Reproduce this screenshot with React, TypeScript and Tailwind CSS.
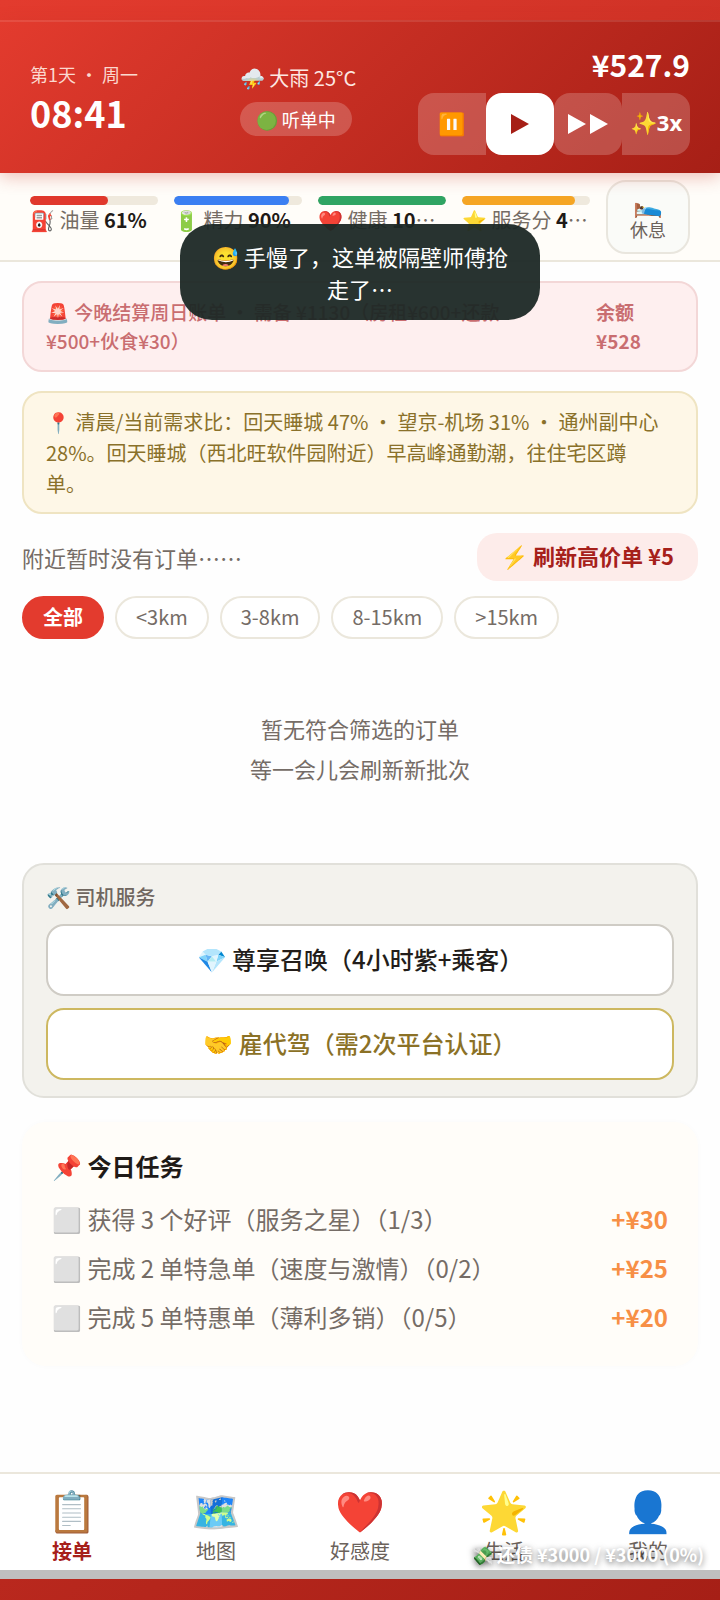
import React from "react";

type Stat = { icon: string; label: string; value: string; percent: number; color: string };

const stats: Stat[] = [
  { icon: "⛽", label: "油量", value: "61%", percent: 61, color: "bg-[#e0382c]" },
  { icon: "🔋", label: "精力", value: "90%", percent: 90, color: "bg-[#3b7ff2]" },
  { icon: "❤️", label: "健康", value: "100%", percent: 100, color: "bg-[#2fa463]" },
  { icon: "⭐", label: "服务分", value: "4.4/5", percent: 88, color: "bg-[#f5a524]" },
];

const filters = ["全部", "<3km", "3-8km", "8-15km", ">15km"];

const tasks = [
  { text: "获得 3 个好评（服务之星）（1/3）", reward: "+¥30" },
  { text: "完成 2 单特急单（速度与激情）（0/2）", reward: "+¥25" },
  { text: "完成 5 单特惠单（薄利多销）（0/5）", reward: "+¥20" },
];

const tabs = [
  { icon: "📋", label: "接单" },
  { icon: "🗺️", label: "地图" },
  { icon: "❤️", label: "好感度" },
  { icon: "🌟", label: "生活" },
  { icon: "👤", label: "我的" },
];

function Header() {
  return (
    <header className="relative z-10 flex items-center justify-between border-t-2 border-white/10 bg-linear-135 from-[#e33b2e] to-[#a61f16] bg-origin-border px-[30px] pt-[22px] pb-[18px] text-white shadow-[0_4px_16px_rgba(200,50,35,0.3)]">
      <div className="min-w-[148px] pb-1">
        <div className="text-lg leading-7 text-[#fbd9cf]">第1天 · 周一</div>
        <div className="text-4xl leading-[48px] font-bold">08:41</div>
      </div>
      <div className="flex flex-col items-start gap-[10px]">
        <div className="text-xl leading-7 text-[#fde8e2]">⛈️ 大雨 25°C</div>
        <div className="rounded-full bg-white/20 px-4 text-lg leading-[34px]">🟢 听单中</div>
      </div>
      <div className="flex flex-col items-end gap-[9px]">
        <div className="text-3xl leading-10 font-bold">¥527.9</div>
        <div className="flex text-[22px] font-bold">
          <button aria-label="暂停" className="h-[62px] w-[68px] rounded-l-2xl bg-white/20 pb-1">⏸️</button>
          <button aria-label="正常速度" className="flex h-[62px] w-[68px] items-center justify-center rounded-2xl bg-white">
            <svg width="18" height="20" viewBox="0 0 18 20" fill="#a61f16"><path d="M0 0L18 10L0 20Z" /></svg>
          </button>
          <button aria-label="快进" className="flex h-[62px] w-[68px] items-center justify-center gap-1 rounded-2xl bg-white/20">
            <svg width="18" height="20" viewBox="0 0 18 20" fill="#fff"><path d="M0 0L18 10L0 20Z" /></svg>
            <svg width="18" height="20" viewBox="0 0 18 20" fill="#fff"><path d="M0 0L18 10L0 20Z" /></svg>
          </button>
          <button className="h-[62px] w-[68px] rounded-r-2xl bg-white/20 pb-1 font-['Noto_Sans','Noto_Sans_CJK_SC',sans-serif] whitespace-nowrap">✨3x</button>
        </div>
      </div>
    </header>
  );
}

function StatsBar() {
  return (
    <section className="flex items-start gap-4 border-b-2 border-[#ebe7dc] bg-[#fffdf9] px-[30px] pt-[7px] pb-[6px]">
      {stats.map((s) => (
        <div key={s.label} className="min-w-0 flex-1 pt-4">
          <div className="h-[9px] overflow-hidden rounded-full bg-[#efe9dd]">
            <div className={`h-full rounded-full ${s.color}`} style={{ width: `${s.percent}%` }} />
          </div>
          <div className="truncate text-xl leading-[30px] text-[#756c64]">
            {s.icon} {s.label} <b className="text-[#1f1a17]">{s.value}</b>
          </div>
        </div>
      ))}
      <button className="flex h-[74px] w-[84px] flex-col items-center justify-center gap-[6px] rounded-[20px] border-2 border-[#e9e6de] bg-[#fafbf8] pb-[2px] text-lg leading-5 text-[#6b625b]">
        <span className="text-2xl leading-5">🛌</span>
        休息
      </button>
    </section>
  );
}

function Toast() {
  return (
    <div role="status" className="absolute top-[224px] left-1/2 z-20 w-1/2 -translate-x-1/2 rounded-[32px] bg-[#1c2825]/95 px-[30px] py-4 text-center text-[22px] leading-8 text-white">
      😅 手慢了，这单被隔壁师傅抢走了…
    </div>
  );
}

export default function App() {
  return (
    <div className="relative flex min-h-screen flex-col bg-linear-135 from-[#e33b2e] to-[#a61f16] pt-5 font-['Noto_Sans_CJK_SC',sans-serif]" lang="zh-CN">
      <Header />
      <StatsBar />
      <Toast />
      <main className="flex flex-1 flex-col bg-[#fefefe] px-[22px] pt-[19px]">
        <section className="flex gap-8 rounded-[20px] border-2 border-[#f3d7d7] bg-[#feefef] px-[22px] pt-[14px] pb-[15px] text-[19px] leading-[29px] font-medium text-[#c96d70]">
          <p className="flex-1">🚨 今晚结算周日账单 · 需备 ¥1130（房租¥600+还款¥500+伙食¥30）</p>
          <p className="w-[78px] font-bold">余额 ¥528</p>
        </section>

        <p className="mt-[19px] rounded-[20px] border-2 border-[#efe4c2] bg-[#fef7e7] py-[13px] pr-8 pl-[22px] text-xl leading-[31px] text-[#8a712a]">
          📍 清晨/当前需求比：回天睡城 47% · 望京-机场 31% · 通州副中心 28%。回天睡城（西北旺软件园附近）早高峰通勤潮，往住宅区蹲单。
        </p>

        <div className="mt-[19px] flex items-center justify-between">
          <h2 className="text-[22px] text-[#756c66]">附近暂时没有订单……</h2>
          <button className="h-12 rounded-[20px] bg-[#fdecea] px-6 pb-1 text-[22px] font-bold text-[#a6201a]">⚡ 刷新高价单 ¥5</button>
        </div>

        <div className="mt-[15px] flex gap-[11px]">
          {filters.map((f, i) => (
            <button
              key={f}
              className={
                i === 0
                  ? "h-[43px] rounded-full border-2 border-[#e33b2e] bg-[#e33b2e] px-[19px] pb-[2px] text-xl leading-8 font-bold text-white"
                  : "h-[43px] rounded-full border-2 border-[#ebe7dc] bg-white px-[19px] pb-[2px] text-xl leading-8 text-[#756c66]"
              }
            >
              {f}
            </button>
          ))}
        </div>

        <div className="mt-[69px] text-center text-[22px] leading-10 text-[#756c66]">
          <p>暂无符合筛选的订单</p>
          <p>等一会儿会刷新新批次</p>
        </div>

        <section className="mt-[75px] rounded-[22px] border-2 border-[#e1e0da] bg-[#f3f2ed] px-[22px] pt-4 pb-4">
          <h3 className="text-xl leading-8 font-medium text-[#6f665f]">🛠️ 司机服务</h3>
          <div className="mt-[11px] flex flex-col gap-3 text-2xl font-medium">
            <button className="h-[72px] rounded-[18px] border-2 border-[#cfccc5] bg-white pb-[2px] text-[#231d1a]">💎 尊享召唤（4小时紫+乘客）</button>
            <button className="h-[72px] rounded-[18px] border-2 border-[#cdb860] bg-white pb-[2px] text-[#8b7126]">🤝 雇代驾（需2次平台认证）</button>
          </div>
        </section>

        <section className="mt-6 rounded-[24px] bg-[#fffdf9] px-[30px] pt-6 pb-[25px] text-2xl shadow-[0_0_6px_rgba(120,80,20,0.02)]">
          <h3 className="leading-10 font-bold text-[#1f1a17]">📌 今日任务</h3>
          <ul className="mt-2">
            {tasks.map((t) => (
              <li key={t.text} className="flex justify-between leading-[49px] text-[#756c66]">
                <span>⬜ {t.text}</span>
                <b className="text-[#f78f46]">{t.reward}</b>
              </li>
            ))}
          </ul>
        </section>
      </main>

      <nav className="relative mb-[30px] border-t-2 border-[#ebe7dc] bg-white">
        <div className="grid grid-cols-5">
          {tabs.map((t, i) => (
            <a key={t.label} href={`#tab-${i}`} className="flex h-24 flex-col items-center pt-[10px] text-[#6b625b]">
              <span className="text-[40px] leading-[50px]">{t.icon}</span>
              <span className={i === 0 ? "text-xl leading-[34px] font-bold text-[#a6201a]" : "text-xl leading-[34px]"}>{t.label}</span>
            </a>
          ))}
        </div>
        <div className="absolute right-4 bottom-1 text-lg leading-6 font-bold whitespace-nowrap text-white [text-shadow:0_2px_6px_rgba(0,0,0,0.6)]">
          💸 还债 ¥3000 / ¥3000 (0%)
        </div>
        <div className="absolute top-full h-[9px] w-full bg-[#bfbfbf]" />
      </nav>
    </div>
  );
}
